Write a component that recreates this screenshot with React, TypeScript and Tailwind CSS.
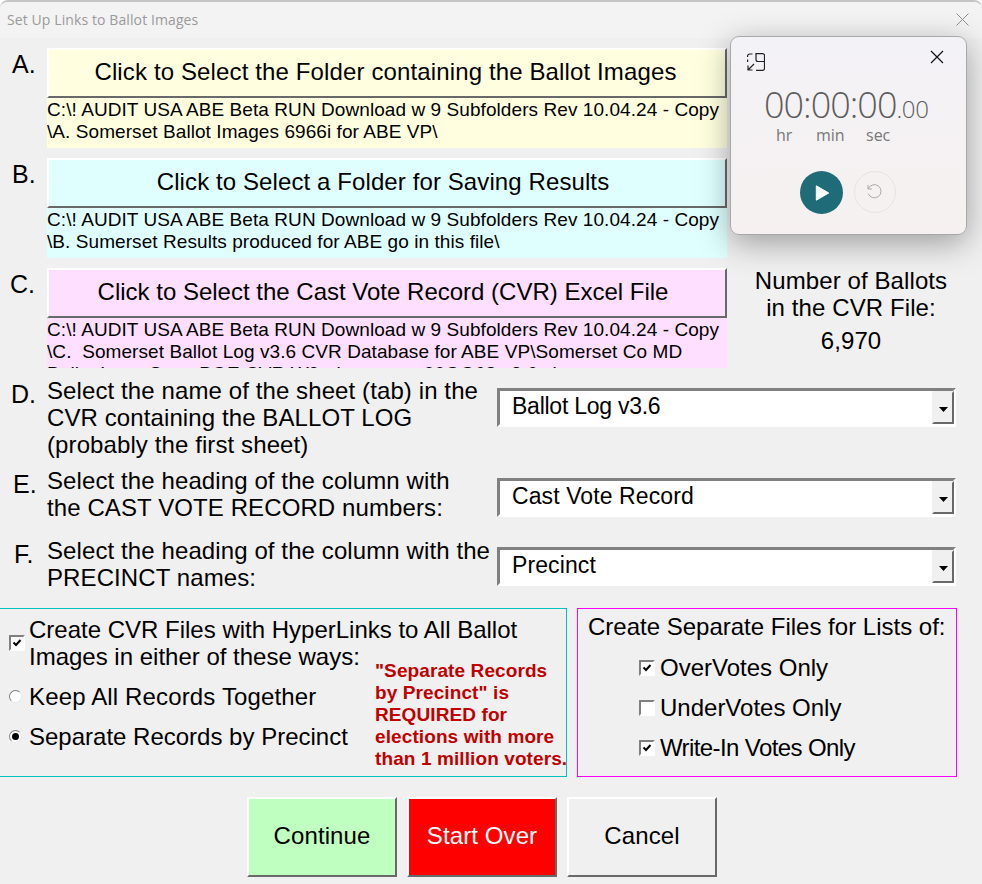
const FONT = "font-['Liberation_Sans',Arial,sans-serif]";

function Check({ on }: { on: boolean }) {
  return (
    <span className="relative inline-block w-[16px] h-[16px] shrink-0 border-2 border-t-[#808080] border-l-[#808080] border-b-white border-r-white bg-white">
      {on && (
        <svg viewBox="0 0 12 12" className="absolute left-0 top-0 w-[12px] h-[12px]">
          <path d="M2.5 5.5 L5 8 L9.5 3" fill="none" stroke="#000" strokeWidth="2" />
        </svg>
      )}
    </span>
  );
}

function Radio({ on }: { on: boolean }) {
  return (
    <span className="flex items-center justify-center w-[13px] h-[13px] shrink-0 rounded-full border border-t-[#808080] border-l-[#808080] border-b-[#e8e8e8] border-r-[#e8e8e8] bg-white">
      {on && <span className="w-[7px] h-[7px] rounded-full bg-black" />}
    </span>
  );
}

function PathRow({ letter, label, bg, lines, pl, btn }: { letter: string; label: string; bg: string; lines: string[]; pl: string; btn: string }) {
  return (
    <div className="flex">
      <div className={`w-[47px] text-[25px] leading-[30px] pt-[1px] ${pl}`}>{letter}</div>
      <div className="w-[680px]">
        <div className={`flex items-center justify-center h-[50px] pb-[3px] text-[24px] border-2 border-t-white border-l-white border-b-[#696969] border-r-[#696969] ${bg} ${btn}`}>
          {label}
        </div>
        <div className={`h-[50px] overflow-hidden text-[19px] tracking-[0.07px] leading-[22px] pt-[1px] whitespace-pre ${bg}`}>
          {lines.map((l) => (
            <div key={l}>{l}</div>
          ))}
        </div>
      </div>
    </div>
  );
}

function SelectBox({ value, cls }: { value: string; cls: string }) {
  return (
    <div className="w-[459px] h-[39px] border-[3px] border-t-[#808080] border-l-[#808080] border-b-white border-r-white bg-white flex">
      <div className={`flex-1 pl-[12px] text-[23px] leading-[30px] ${cls}`}>{value}</div>
      <div className="w-[22px] h-[33px] -mr-[1px] flex items-center justify-center border-2 border-t-[#f0f0f0] border-l-[#f0f0f0] border-b-[#696969] border-r-[#696969] bg-[#f0f0f0]">
        <svg width="9" height="5" viewBox="0 0 9 5" className="mt-[3px]">
          <path d="M0 0H9L4.5 5Z" fill="#000" />
        </svg>
      </div>
    </div>
  );
}

function SelectRow({ letter, lines, value, pad, pl, cls }: { letter: string; lines: string[]; value: string; pad: string; pl: string; cls: string }) {
  return (
    <div className="flex">
      <div className={`w-[47px] text-[25px] leading-[30px] pt-[2px] ${pl}`}>{letter}</div>
      <div className="w-[450px] text-[24px] tracking-[0.1px] leading-[27px] whitespace-pre">
        {lines.map((l) => (
          <div key={l}>{l}</div>
        ))}
      </div>
      <div className={pad}>
        <SelectBox value={value} cls={cls} />
      </div>
    </div>
  );
}

function Timer() {
  return (
    <div className="absolute left-[730px] top-[36px] w-[237px] h-[199px] rounded-[9px] border border-[#a8a8a8] bg-gradient-to-b from-[#f3f2f6] to-[#f6f1f0] shadow-[0_8px_32px_rgba(0,0,0,0.35)] font-['Open_Sans',sans-serif]">
      <svg viewBox="0 0 18 18" className="absolute left-[16px] top-[16px] w-[18px] h-[18px]" fill="none" stroke="#222" strokeWidth="1.2">
        <path d="M.6 4V3a2 2 0 0 1 2-2H5.5M.6 6.5V9M8.5 .6H15.5a2 2 0 0 1 2 2V15.4a2 2 0 0 1-2 2H9M.6 11.5" />
        <path d="M9 .6V6.5a2 2 0 0 0 2 2H17.4" />
        <path d="M1 17L7 11M1 12.5V17H5.5" />
      </svg>
      <svg viewBox="0 0 14 14" className="absolute left-[199px] top-[13px] w-[14px] h-[14px]" fill="none" stroke="#111" strokeWidth="1.2">
        <path d="M1 1L13 13M13 1L1 13" />
      </svg>
      <div className="absolute left-[33px] top-[43px] text-[#5c5c5c] font-light text-[36px] leading-[50px] tracking-[-1px] whitespace-nowrap">
        00:00:00<span className="text-[24px] tracking-[-0.3px]">.00</span>
      </div>
      <div className="absolute left-[45px] top-[88px] text-[#777] text-[16px] leading-[20px]">hr</div>
      <div className="absolute left-[85px] top-[88px] text-[#777] text-[16px] leading-[20px]">min</div>
      <div className="absolute left-[135px] top-[88px] text-[#777] text-[16px] leading-[20px]">sec</div>
      <div className="absolute left-[69px] top-[134px] w-[43px] h-[43px] rounded-full bg-[#1f6b78] flex items-center justify-center">
        <svg viewBox="0 0 14 16" className="w-[15px] h-[16px] ml-[1px]">
          <path d="M.8 .8V15.2L13.2 8Z" fill="#fff" stroke="#fff" strokeLinejoin="round" />
        </svg>
      </div>
      <div className="absolute left-[123px] top-[134px] w-[42px] h-[42px] rounded-full border border-[#e6e3e3] flex items-center justify-center">
        <svg viewBox="0 0 16 16" className="w-[16px] h-[16px]" fill="none" stroke="#a9a9a9" strokeWidth="1">
          <path d="M1 1V5H5M1.2 5A6.6 6.6 0 1 1 1.2 9.5" />
        </svg>
      </div>
    </div>
  );
}

export default function App() {
  return (
    <div className={`relative w-[982px] h-[884px] overflow-hidden bg-white text-black ${FONT}`}>
      <div className="h-full rounded-t-[8px] border-t-2 border-[#c4c4c4] bg-[#f0f0f0]">
        <div className="h-[36px] flex items-center justify-between pl-[7px] pr-[13px] pb-[2px] bg-[#f3f3f3] rounded-t-[8px] font-['Open_Sans',sans-serif] text-[14px] tracking-[0.1px] text-[#9a9a9a]">
          <span>Set Up Links to Ballot Images</span>
          <svg viewBox="0 0 13 13" className="w-[13px] h-[13px]" fill="none" stroke="#8e8e8e" strokeWidth="1">
            <path d="M.5 .5L12.5 12.5M12.5 .5L.5 12.5" />
          </svg>
        </div>

        <div className="pt-[10px]">
          <div className="flex flex-col gap-[10px]">
            <PathRow
              letter="A."
              pl="pl-[12px]"
              btn="pr-[3px] tracking-[0.13px]"
              label="Click to Select the Folder containing the Ballot Images"
              bg="bg-[#ffffe0]"
              lines={["C:\\! AUDIT USA ABE Beta RUN Download w 9 Subfolders Rev 10.04.24 - Copy", "\\A. Somerset Ballot Images 6966i for ABE VP\\"]}
            />
            <PathRow
              letter="B."
              pl="pl-[12px]"
              btn="pr-[8px] tracking-[0.1px]"
              label="Click to Select a Folder for Saving Results"
              bg="bg-[#dfffff]"
              lines={["C:\\! AUDIT USA ABE Beta RUN Download w 9 Subfolders Rev 10.04.24 - Copy", "\\B. Sumerset Results produced for ABE go in this file\\"]}
            />
            <div className="relative">
              <PathRow
                letter="C."
                pl="pl-[10px]"
                btn="pr-[8px]"
                label="Click to Select the Cast Vote Record (CVR) Excel File"
                bg="bg-[#ffdfff]"
                lines={["C:\\! AUDIT USA ABE Beta RUN Download w 9 Subfolders Rev 10.04.24 - Copy", "\\C.  Somerset Ballot Log v3.6 CVR Database for ABE VP\\Somerset Co MD", "Ballot Log - State BOE CVR W9 - beta run - 00GG68 v3.6.xlsx"]}
              />
              <div className="absolute left-[727px] -top-[1px] w-[248px] text-center text-[24px] leading-[27px] tracking-[0.1px]">
                <div>Number of Ballots</div>
                <div>in the CVR File:</div>
                <div className="mt-[6px]">6,970</div>
              </div>
            </div>
          </div>

          <div className="mt-[9px]">
            <div className="h-[90px]">
              <SelectRow letter="D." pl="pl-[11px]" pad="pt-[11px]" cls="tracking-[-0.25px]" value="Ballot Log v3.6" lines={["Select the name of the sheet (tab) in the", "CVR containing the BALLOT LOG", "(probably the first sheet)"]} />
            </div>
            <div className="h-[70px]">
              <SelectRow letter="E." pl="pl-[13px]" pad="pt-[11px]" cls="tracking-[0.1px]" value="Cast Vote Record" lines={["Select the heading of the column with", "the CAST VOTE RECORD numbers:"]} />
            </div>
            <div className="h-[71px]">
              <SelectRow letter="F." pl="pl-[14px]" pad="pt-[10px]" cls="tracking-[0.1px]" value="Precinct" lines={["Select the heading of the column with the", "PRECINCT names:"]} />
            </div>
          </div>

          <div className="flex gap-[10px] h-[169px]">
            <div className="w-[567px] flex border-y border-r border-[#00c0c0]">
              <div className="w-[375px] pl-[9px] text-[24px] leading-[27px]">
                <div className="flex items-center gap-[4px] mt-[7px]">
                  <Check on />
                  <div className="whitespace-pre">
                    <div>Create CVR Files with HyperLinks to All Ballot</div>
                    <div>Images in either of these ways:</div>
                  </div>
                </div>
                <div className="flex items-center gap-[7px] mt-[13px]">
                  <Radio on={false} />
                  <span className="tracking-[0.15px]">Keep All Records Together</span>
                </div>
                <div className="flex items-center gap-[7px] mt-[13px]">
                  <Radio on />
                  <span>Separate Records by Precinct</span>
                </div>
              </div>
              <div className="pt-[51px] font-bold text-[19px] tracking-[0.1px] leading-[22px] text-[#c00000] whitespace-pre">
                <div>"Separate Records</div>
                <div>by Precinct" is</div>
                <div>REQUIRED for</div>
                <div>elections with more</div>
                <div>than 1 million voters.</div>
              </div>
            </div>
            <div className="w-[380px] border border-[#ff00ff] text-[24px] leading-[27px]">
              <div className="pl-[10px] pt-[4px]">Create Separate Files for Lists of:</div>
              <div className="pl-[61px] pt-[14px] flex flex-col gap-[13px]">
                <div className="flex items-center gap-[5px]"><Check on /><span>OverVotes Only</span></div>
                <div className="flex items-center gap-[5px]"><Check on={false} /><span>UnderVotes Only</span></div>
                <div className="flex items-center gap-[5px]"><Check on /><span className="tracking-[-0.6px]">Write-In Votes Only</span></div>
              </div>
            </div>
          </div>

          <div className="flex gap-[10px] pl-[247px] mt-[20px]">
            {[
              ["Continue", "bg-[#bfffbf] text-black"],
              ["Start Over", "bg-[#ff0000] text-white"],
              ["Cancel", "bg-[#f0f0f0] text-black"],
            ].map(([t, c]) => (
              <div key={t} className={`w-[150px] h-[80px] flex items-center justify-center pb-[2px] text-[24px] tracking-[0.1px] border-2 border-t-white border-l-white border-b-[#696969] border-r-[#696969] ${c}`}>
                {t}
              </div>
            ))}
          </div>
        </div>
      </div>
      <Timer />
    </div>
  );
}
